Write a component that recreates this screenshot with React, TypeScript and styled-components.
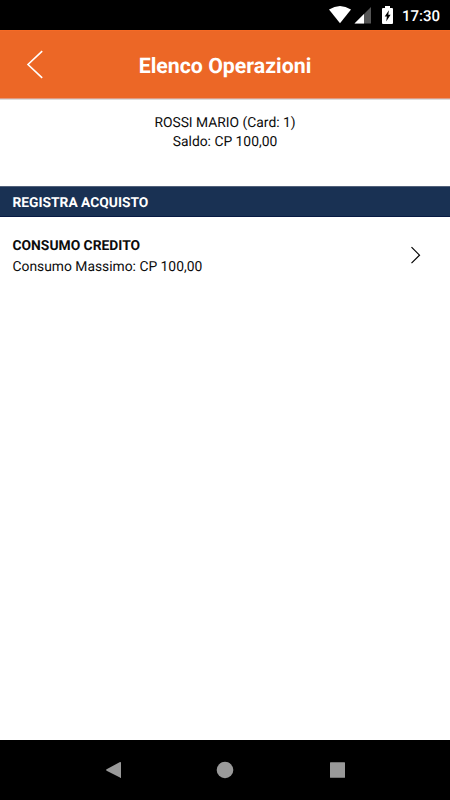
import React from "react";
import styled, { createGlobalStyle } from "styled-components";

const GlobalStyle = createGlobalStyle`
  * { box-sizing: border-box; }
  body { margin: 0; background: #fff; font-family: Roboto, "Liberation Sans", sans-serif; text-rendering: geometricPrecision; }
  svg { display: block; flex: none; }
`;

const Screen = styled.div`
  width: 450px;
  height: 800px;
  display: flex;
  flex-direction: column;
  background: #fff;
  color: #0c0c0c;
  overflow: hidden;
`;

const StatusBar = styled.div`
  height: 30px;
  flex: none;
  background: #000;
  display: flex;
  align-items: center;
  justify-content: flex-end;
  padding-right: 10px;
`;

const Clock = styled.span`
  width: 38px;
  margin-left: 8px;
  padding-top: 1px;
  color: #fff;
  font-size: 15px;
  font-weight: 500;
  line-height: 30px;
  white-space: nowrap;
`;

const Header = styled.header`
  height: 69px;
  flex: none;
  display: grid;
  grid-template-columns: 70px 1fr 70px;
  align-items: center;
  background: #ec6726;
  border-top: 1px solid #f56a25;
  border-bottom: 1px solid #e09a80;
  box-shadow: 0 1px 0 #dcdcdc;
`;

const BackButton = styled.button`
  border: 0;
  padding: 0 0 0 26px;
  background: none;
`;

const Title = styled.h1`
  margin: 5px 0 0;
  color: #fff;
  font-size: 21.3px;
  line-height: 28px;
  font-weight: 700;
  text-align: center;
  white-space: nowrap;
`;

const Account = styled.section`
  height: 87px;
  flex: none;
  padding-top: 15px;
  text-align: center;
  font-size: 13.85px;
  line-height: 19px;
`;

const SectionTitle = styled.h2`
  height: 31px;
  flex: none;
  margin: 0;
  padding-left: 12.5px;
  background: #193153;
  border-top: 1px solid #52617a;
  border-bottom: 1px solid #071a43;
  color: #fff;
  font-size: 13.8px;
  font-weight: 700;
  line-height: 32px;
`;

const Operation = styled.div`
  flex: 1;
  display: flex;
  align-items: flex-start;
  justify-content: space-between;
  padding: 18px 29px 0 12.5px;
`;

const OperationText = styled.div`
  padding-top: 1px;
  font-size: 13.85px;
  line-height: 21px;
`;

const OperationName = styled.div`
  font-weight: 700;
`;

const Chevron = styled.svg`
  margin-top: 11px;
`;

const NavBar = styled.nav`
  height: 60px;
  flex: none;
  display: flex;
  justify-content: center;
  align-items: center;
  gap: 92px;
  background: #000;
`;

export default function App() {
  return (
    <Screen>
      <GlobalStyle />
      <StatusBar>
        <svg width="66" height="22" viewBox="328 4 66 22">
          <path d="M329 9.5Q340 2.5 351 9.5L340 23.3Z" fill="#fff" />
          <path d="M371 7V23.5H354.5Z" fill="#555" />
          <path d="M364 14V23.5H354.5Z" fill="#fff" />
          <path d="M385 6h5v2h2q1 0 1 1v14q0 1-1 1h-9q-1 0-1-1V9q0-1 1-1h2z" fill="#fff" />
          <path d="M388.9 10.2L384.7 16.4H386.9L386.2 21.5L390.6 14.8H388.3Z" fill="#000" />
        </svg>
        <Clock>17:30</Clock>
      </StatusBar>
      <Header>
        <BackButton aria-label="Indietro">
          <svg width="18" height="30" viewBox="26 50 18 30">
            <path d="M42.2 51.2L28 64.5L42.2 77.8" fill="none" stroke="#fff" strokeWidth="1.6" />
          </svg>
        </BackButton>
        <Title>Elenco Operazioni</Title>
      </Header>
      <Account>
        <div>ROSSI MARIO (Card: 1)</div>
        <div>Saldo: CP 100,00</div>
      </Account>
      <SectionTitle>REGISTRA ACQUISTO</SectionTitle>
      <Operation>
        <OperationText>
          <OperationName>CONSUMO CREDITO</OperationName>
          <div>Consumo Massimo: CP 100,00</div>
        </OperationText>
        <Chevron width="11" height="18" viewBox="410 246 11 18">
          <path d="M411.5 247.2L419.5 255.2L411.5 263.2" fill="none" stroke="#000" strokeWidth="1.2" />
        </Chevron>
      </Operation>
      <NavBar>
        <svg width="20" height="20" viewBox="102 760 20 20">
          <path d="M119 762.5V777.5L105.6 770.7Q104.6 770 105.6 769.3L119 762Q120 761.8 120 762.8V777.2Q120 778.3 119 777.7Z" fill="#999" />
        </svg>
        <svg width="20" height="20" viewBox="0 0 20 20">
          <circle cx="10" cy="10" r="8.3" fill="#999" />
        </svg>
        <svg width="20" height="20" viewBox="0 0 20 20">
          <rect x="3" y="2.3" width="15" height="15.4" rx="0.5" fill="#999" />
        </svg>
      </NavBar>
    </Screen>
  );
}
